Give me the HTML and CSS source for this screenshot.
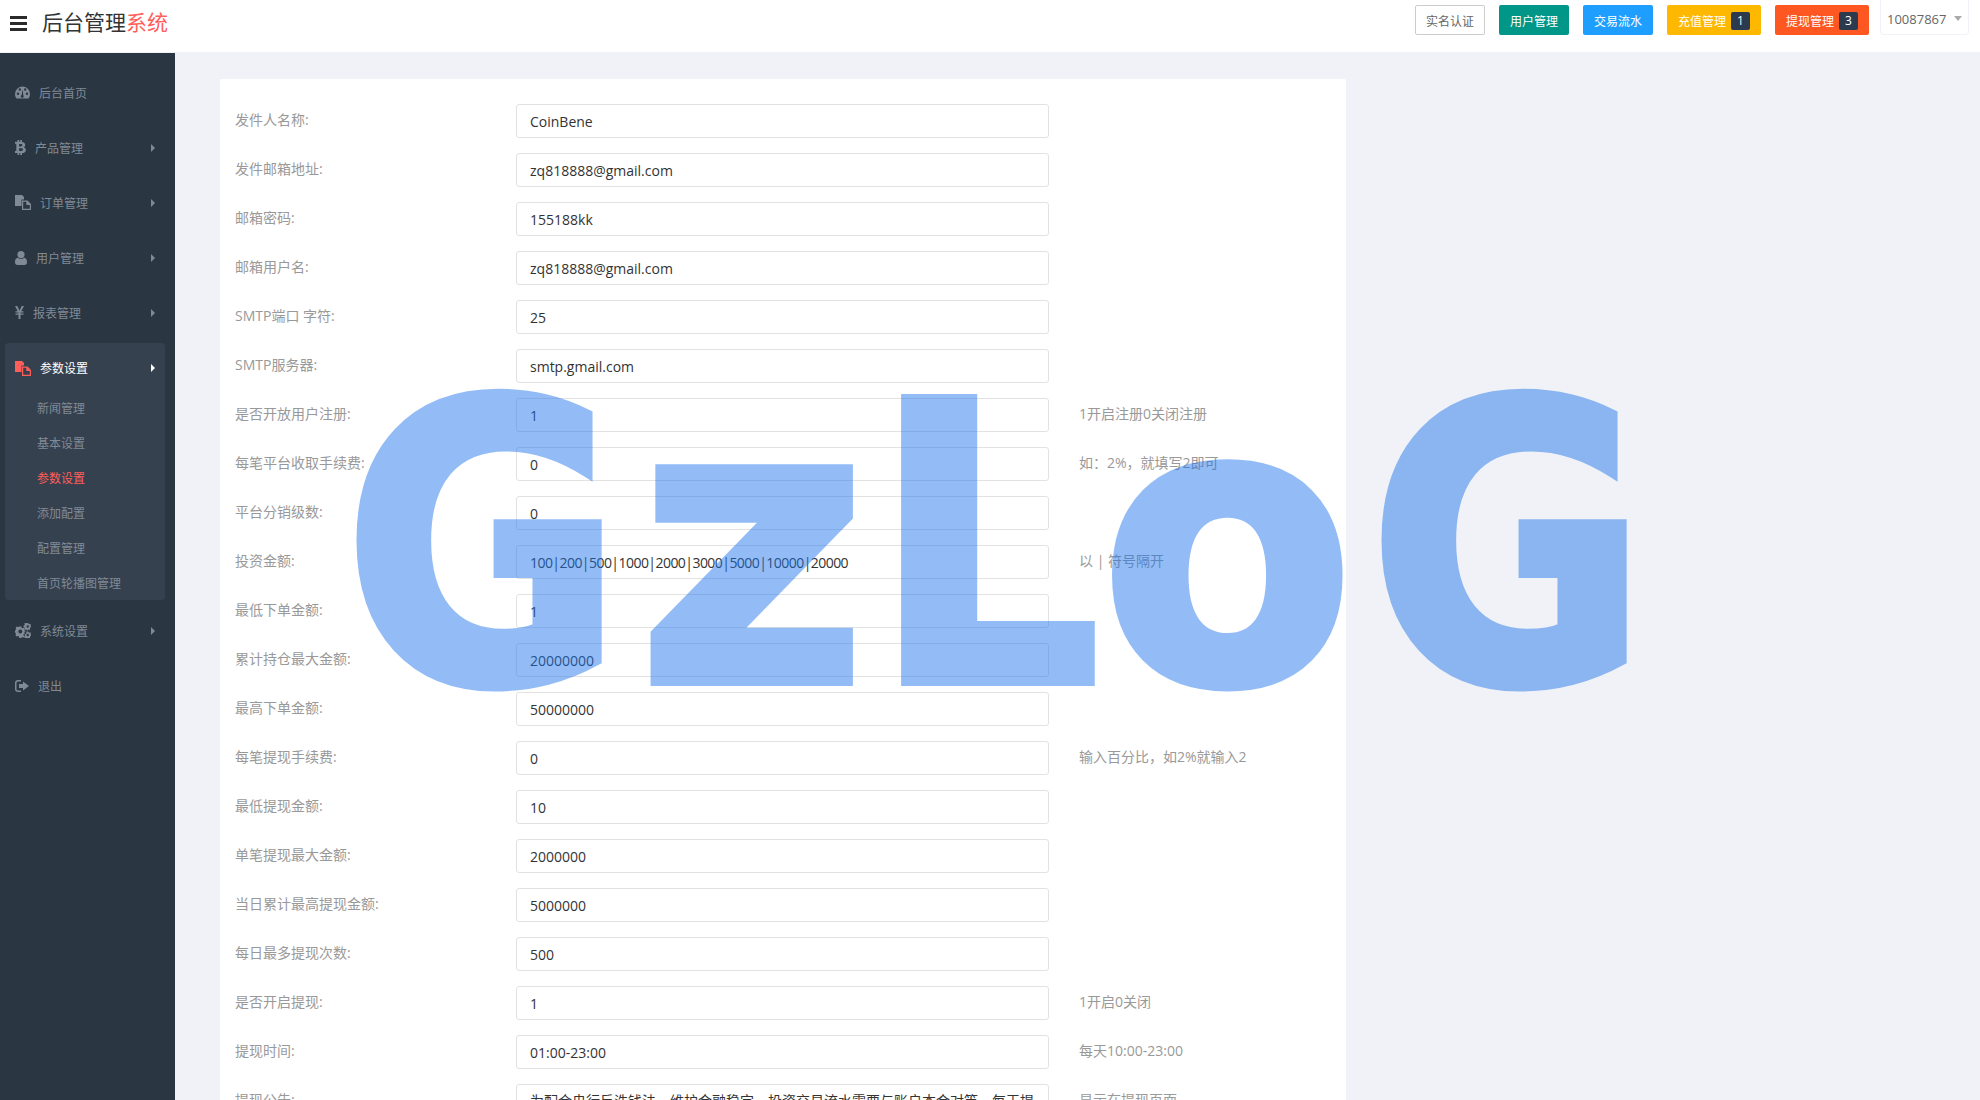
FILE: index.html
```html
<!DOCTYPE html>
<html lang="zh-CN">
<head>
    <meta charset="UTF-8">
    <title>后台管理系统</title>
    <link rel="stylesheet" href="styles.css">
</head>
<body>

    <!-- Header -->
    <header class="topbar">
        <div class="bars"><i></i><i></i><i></i></div>
        <div class="brand">后台管理<span>系统</span></div>
        <div class="top-actions">
            <a class="btn btn-plain">实名认证</a>
            <a class="btn btn-green">用户管理</a>
            <a class="btn btn-blue">交易流水</a>
            <a class="btn btn-yellow">充值管理<b>1</b></a>
            <a class="btn btn-orange">提现管理<b>3</b></a>
            <div class="user-box">10087867<i class="caret-down"></i></div>
        </div>
    </header>

    <div class="layout">
        <!-- Sidebar -->
        <nav class="sidebar">
            <a class="nav-item">
                <svg width="15" height="13" viewBox="0 0 15 13"><path fill-rule="evenodd" d="M7.5 0.5A7.5 7.5 0 0 0 0 8c0 1.8.6 3.4 1.6 4.6h11.8C14.400 11.400 15 9.800 15 8A7.500 7.500 0 0 0 7.500.5zM3 8.900a1.200 1.200 0 1 1 0-2.400 1.200 1.200 0 0 1 0 2.400zM4.800 4.700a1.200 1.200 0 1 1 0-2.400 1.200 1.200 0 0 1 0 2.400zM8.700 10.300a1.500 1.500 0 0 1-3 0c0-.6.400-1.200 1-1.400l.8-5.600.8 5.600c.0.200.4.800.4 1.400zM7.500 3.300zM10.200 4.700a1.200 1.200 0 1 1 0-2.400 1.200 1.200 0 0 1 0 2.400zM12 8.900a1.200 1.200 0 1 1 0-2.400 1.200 1.200 0 0 1 0 2.400z"/></svg>
                <span>后台首页</span>
            </a>
            <a class="nav-item has-sub">
                <svg width="11" height="15" viewBox="0 0 11 15"><path fill-rule="evenodd" d="M2.500 0h1.700v1.800h1V0h1.700v1.900c2 .3 3.300 1.300 3.300 3 0 1.100-.6 1.900-1.500 2.300 1.300.4 2.200 1.300 2.200 2.700 0 2-1.500 3-3.900 3.200V15H5.200v-1.900h-1V15H2.500v-1.900H0v-2h1.300V3.800H0v-2h2.500zM4.100 3.900v2.500h1.800c.9 0 1.500-.4 1.500-1.200 0-.9-.6-1.300-1.500-1.300zM4.100 8.300V11h2.200c1 0 1.700-.5 1.700-1.400 0-.9-.7-1.300-1.700-1.300z"/></svg>
                <span>产品管理</span><i class="caret"></i>
            </a>
            <a class="nav-item has-sub">
                <svg width="16" height="15" viewBox="0 0 16 15"><path fill-rule="evenodd" d="M0 0h7l2 2v2.500H6.500V11H0zM7 5.500h5.500L16 9v6H7zM8.200 6.700v7.100h6.600V10h-3.500V6.700z"/></svg>
                <span>订单管理</span><i class="caret"></i>
            </a>
            <a class="nav-item has-sub">
                <svg width="12" height="14" viewBox="0 0 12 14"><path d="M6 0a3.600 3.600 0 1 1 0 7.200A3.600 3.600 0 0 1 6 0zM2.800 6.800C3.700 7.600 4.800 8 6 8s2.300-.4 3.200-1.200c1.800.2 2.800 1.700 2.800 4.400 0 1.700-1 2.800-2.500 2.800h-7C1 14 0 12.900 0 11.200c0-2.700 1-4.200 2.800-4.400z"/></svg>
                <span>用户管理</span><i class="caret"></i>
            </a>
            <a class="nav-item has-sub">
                <svg width="9" height="13" viewBox="0 0 9 13"><path d="M0 0h2.300l2.200 4.500L6.700 0H9L6.300 5.200H8.500v1.200H5.500v1.100h3v1.200h-3V13H3.500V8.700h-3V7.500h3V6.400h-3V5.200h2.200z"/></svg>
                <span>报表管理</span><i class="caret"></i>
            </a>
            <div class="nav-group">
                <a class="nav-item has-sub active">
                    <svg width="16" height="15" viewBox="0 0 16 15"><path fill-rule="evenodd" d="M0 0h7l2 2v2.500H6.500V11H0zM7 5.500h5.500L16 9v6H7zM8.200 6.700v7.100h6.600V10h-3.500V6.700z"/></svg>
                    <span>参数设置</span><i class="caret"></i>
                </a>
                <a class="sub-item">新闻管理</a>
                <a class="sub-item">基本设置</a>
                <a class="sub-item current">参数设置</a>
                <a class="sub-item">添加配置</a>
                <a class="sub-item">配置管理</a>
                <a class="sub-item">首页轮播图管理</a>
            </div>
            <a class="nav-item has-sub">
                <svg width="16" height="15" viewBox="0 0 16 15"><path fill-rule="evenodd" d="M4.300 3.500h2l.3 1.300 1 .5 1.200-.6 1.400 1.400-.6 1.200.4 1 1.300.4v2l-1.300.3-.4 1 .6 1.200-1.400 1.400-1.200-.6-1 .4-.3 1.300h-2L4 13.400l-1-.4-1.200.6L.4 12.200l.6-1.200-.4-1L0 9.500v-2l.7-.4.4-1-.6-1.200 1.400-1.400 1.200.6 1-.4zM5.300 6.500a2 2 0 1 0 0 4 2 2 0 0 0 0-4zM12 0h1.300l.2 1 .7.300.9-.5.900.9-.5.900.1.400h.4v1.300l-.9.200-.3.700.5.900-.9.900-.9-.5-.7.300-.2.900H12l-.2-.9-.7-.3-.9.500-.9-.9.500-.9-.3-.7-.9-.2V2.500l.9-.2.300-.7-.500-.9.900-.9.900.5.700-.3zM12.700 2.300a1.200 1.200 0 1 0 0 2.400 1.200 1.200 0 0 0 0-2.400zM12 8.500h1.300l.2.900.7.300.9-.5.900.9-.5.900.3.700.2.100v1.300l-.9.200-.3.700.5.900-.9.900-.9-.5-.7.300-.1.100H12l-.2-.4-.7-.3-.9.500-.9-.9.500-.9-.3-.7-.9-.2V11l.9-.2.300-.7-.500-.9.900-.9.900.5.700-.3zM12.700 10.800a1.200 1.200 0 1 0 0 2.400 1.200 1.200 0 0 0 0-2.400z"/></svg>
                <span>系统设置</span><i class="caret"></i>
            </a>
            <a class="nav-item">
                <svg width="14" height="12" viewBox="0 0 14 12"><path fill-rule="evenodd" d="M3 0h3v1.500H3A1.500 1.500 0 0 0 1.500 3v6A1.500 1.500 0 0 0 3 10.500h3V12H3a3 3 0 0 1-3-3V3a3 3 0 0 1 3-3zM8 1.500 14 6 8 10.500V8H4V4h4z"/></svg>
                <span>退出</span>
            </a>
        </nav>

        <!-- Main Content -->
        <main class="content">
            <form class="card">
                <div class="row"><label>发件人名称:</label><input type="text" value="CoinBene"></div>
                <div class="row"><label>发件邮箱地址:</label><input type="text" value="zq818888@gmail.com"></div>
                <div class="row"><label>邮箱密码:</label><input type="text" value="155188kk"></div>
                <div class="row"><label>邮箱用户名:</label><input type="text" value="zq818888@gmail.com"></div>
                <div class="row"><label>SMTP端口 字符:</label><input type="text" value="25"></div>
                <div class="row"><label>SMTP服务器:</label><input type="text" value="smtp.gmail.com"></div>
                <div class="row"><label>是否开放用户注册:</label><input type="text" value="1"><p>1开启注册0关闭注册</p></div>
                <div class="row"><label>每笔平台收取手续费:</label><input type="text" value="0"><p>如：2%，就填写2即可</p></div>
                <div class="row"><label>平台分销级数:</label><input type="text" value="0"></div>
                <div class="row"><label>投资金额:</label><input class="tight" type="text" value="100|200|500|1000|2000|3000|5000|10000|20000"><p>以 | 符号隔开</p></div>
                <div class="row"><label>最低下单金额:</label><input type="text" value="1"></div>
                <div class="row"><label>累计持仓最大金额:</label><input type="text" value="20000000"></div>
                <div class="row"><label>最高下单金额:</label><input type="text" value="50000000"></div>
                <div class="row"><label>每笔提现手续费:</label><input type="text" value="0"><p>输入百分比，如2%就输入2</p></div>
                <div class="row"><label>最低提现金额:</label><input type="text" value="10"></div>
                <div class="row"><label>单笔提现最大金额:</label><input type="text" value="2000000"></div>
                <div class="row"><label>当日累计最高提现金额:</label><input type="text" value="5000000"></div>
                <div class="row"><label>每日最多提现次数:</label><input type="text" value="500"></div>
                <div class="row"><label>是否开启提现:</label><input type="text" value="1"><p>1开启0关闭</p></div>
                <div class="row"><label>提现时间:</label><input type="text" value="01:00-23:00"><p>每天10:00-23:00</p></div>
                <div class="row"><label>提现公告:</label><textarea rows="4">为配合央行反洗钱法，维护金融稳定，投资交易流水需要与账户本金对等，每天提现时间</textarea><p>显示在提现页面</p></div>
            </form>
        </main>
    </div>

    <!-- Watermark -->
    <div class="watermark"><span class="wm-g1">G</span><span class="wm-z">z</span><span class="wm-l">L</span><span class="wm-o">o</span><span class="wm-g2">G</span></div>

</body>
</html>
```
FILE: styles.css
```css
/* Global Styles */
* {
    margin: 0;
    padding: 0;
    box-sizing: border-box;
}

html, body {
    height: 100%;
    overflow: hidden;
}

body {
    background: #f0f2f7;
    color: #333;
    font-family: "Open Sans", "Noto Sans CJK SC", sans-serif;
    font-size: 14px;
}

/* Header */
.topbar {
    display: flex;
    align-items: flex-start;
    height: 52px;
    background: #fff;
    padding-left: 10px;
}

.bars {
    display: flex;
    flex-direction: column;
    gap: 3px;
    width: 17px;
    margin-top: 16px;
}

.bars i {
    display: block;
    height: 3px;
    background: #2b2b2b;
}

.brand {
    margin: 7px 0 0 15px;
    font-size: 21px;
    line-height: 30px;
    font-weight: 400;
    color: #333;
}

.brand span {
    color: #ff5f5a;
}

.top-actions {
    display: flex;
    align-items: flex-start;
    margin-left: auto;
    padding-right: 11px;
}

.btn {
    display: flex;
    align-items: center;
    justify-content: center;
    gap: 5px;
    height: 30px;
    margin: 5px 14px 0 0;
    padding: 2px 10px 0;
    border-radius: 2px;
    color: #fff;
    font-size: 12px;
}

.btn b {
    width: 19px;
    height: 18px;
    line-height: 18px;
    border-radius: 2px;
    background: #2b3a4e;
    text-align: center;
    font-weight: 400;
}

.btn-plain {
    color: #666;
    background: #fff;
    border: 1px solid #ccc;
    width: 70px;
}

.btn-green { background: #009688; width: 70px; }
.btn-blue { background: #1e9fff; width: 70px; }
.btn-yellow { background: #ffb800; width: 94px; }
.btn-orange { background: #ff5722; width: 94px; margin-right: 11px; }

.user-box {
    display: flex;
    align-items: center;
    width: 89px;
    height: 35px;
    padding: 3px 0 0 6px;
    border: 1px solid #f0f2f7;
    border-top: none;
    border-radius: 0 0 4px 4px;
    font-size: 13px;
    color: #666;
}

.caret-down {
    margin-left: 8px;
    border-top: 5px solid #aaa;
    border-left: 4px solid transparent;
    border-right: 4px solid transparent;
}

/* Layout */
.layout {
    display: flex;
    height: 1048px;
}

/* Sidebar */
.sidebar {
    width: 175px;
    flex-shrink: 0;
    margin-top: 1px;
    padding: 12px 10px 0 5px;
    background: #2b3643;
    color: #808a96;
    font-size: 12px;
}

.nav-item {
    display: flex;
    align-items: center;
    height: 55px;
    padding: 0 10px;
}

.nav-item svg {
    fill: #808a96;
    margin-right: 9px;
    flex-shrink: 0;
}

.nav-item .caret {
    margin-left: auto;
    border-left: 4px solid #808a96;
    border-top: 4px solid transparent;
    border-bottom: 4px solid transparent;
}

.nav-group {
    height: 257px;
    margin: 3px 0;
    background: #364150;
    border-radius: 4px;
}

.nav-group .nav-item {
    height: 50px;
    margin-bottom: -2px;
}

.nav-item.active {
    color: #fff;
}

.nav-item.active svg {
    fill: #ff5f5a;
}

.nav-item.active .caret {
    border-left-color: #fff;
}

.sub-item {
    display: block;
    height: 35px;
    line-height: 35px;
    padding-left: 32px;
}

.sub-item.current {
    color: #ff5f5a;
}

/* Main Content */
.content {
    flex: 1;
    padding: 27px 0 0 45px;
    overflow: hidden;
}

.card {
    width: 1126px;
    padding: 25px 15px 0;
    background: #fff;
    border-radius: 2px;
}

.row {
    display: flex;
    align-items: flex-start;
    margin-bottom: 15px;
}

.row label {
    width: 281px;
    flex-shrink: 0;
    line-height: 32px;
    color: #999;
}

.row input, .row textarea {
    display: block;
    width: 533px;
    height: 34px;
    padding: 0 13px;
    border: 1px solid #e2e2e2;
    border-radius: 3px;
    background: transparent;
    color: #333;
    font-family: "Open Sans", "Noto Sans CJK SC", sans-serif;
    font-size: 14px;
    flex-shrink: 0;
}

.row input.tight {
    letter-spacing: -0.55px;
}

.row textarea {
    height: 110px;
    padding-top: 6px;
    line-height: 20px;
    resize: none;
}

.row p {
    margin-left: 30px;
    line-height: 32px;
    color: #999;
}

/* Watermark */
.watermark {
    position: absolute;
    left: 344px;
    top: 307px;
    display: flex;
    font-family: "DejaVu Sans", sans-serif;
    font-weight: 700;
    font-size: 387px;
    line-height: 480px;
    color: #1b73ec;
    -webkit-text-stroke: 10px #1b73ec;
    opacity: 0.47;
    pointer-events: none;
    white-space: nowrap;
}

.watermark span {
    display: block;
    transform-origin: left center;
}

.wm-g1 { width: 294px; transform: scaleX(0.876); }
.wm-z { width: 235px; transform: scaleX(1.015); }
.wm-l { width: 228px; transform: scaleX(0.92); }
.wm-o { width: 268px; transform: scaleX(0.95); }
.wm-g2 { width: 290px; transform: scaleX(0.876); }
```
